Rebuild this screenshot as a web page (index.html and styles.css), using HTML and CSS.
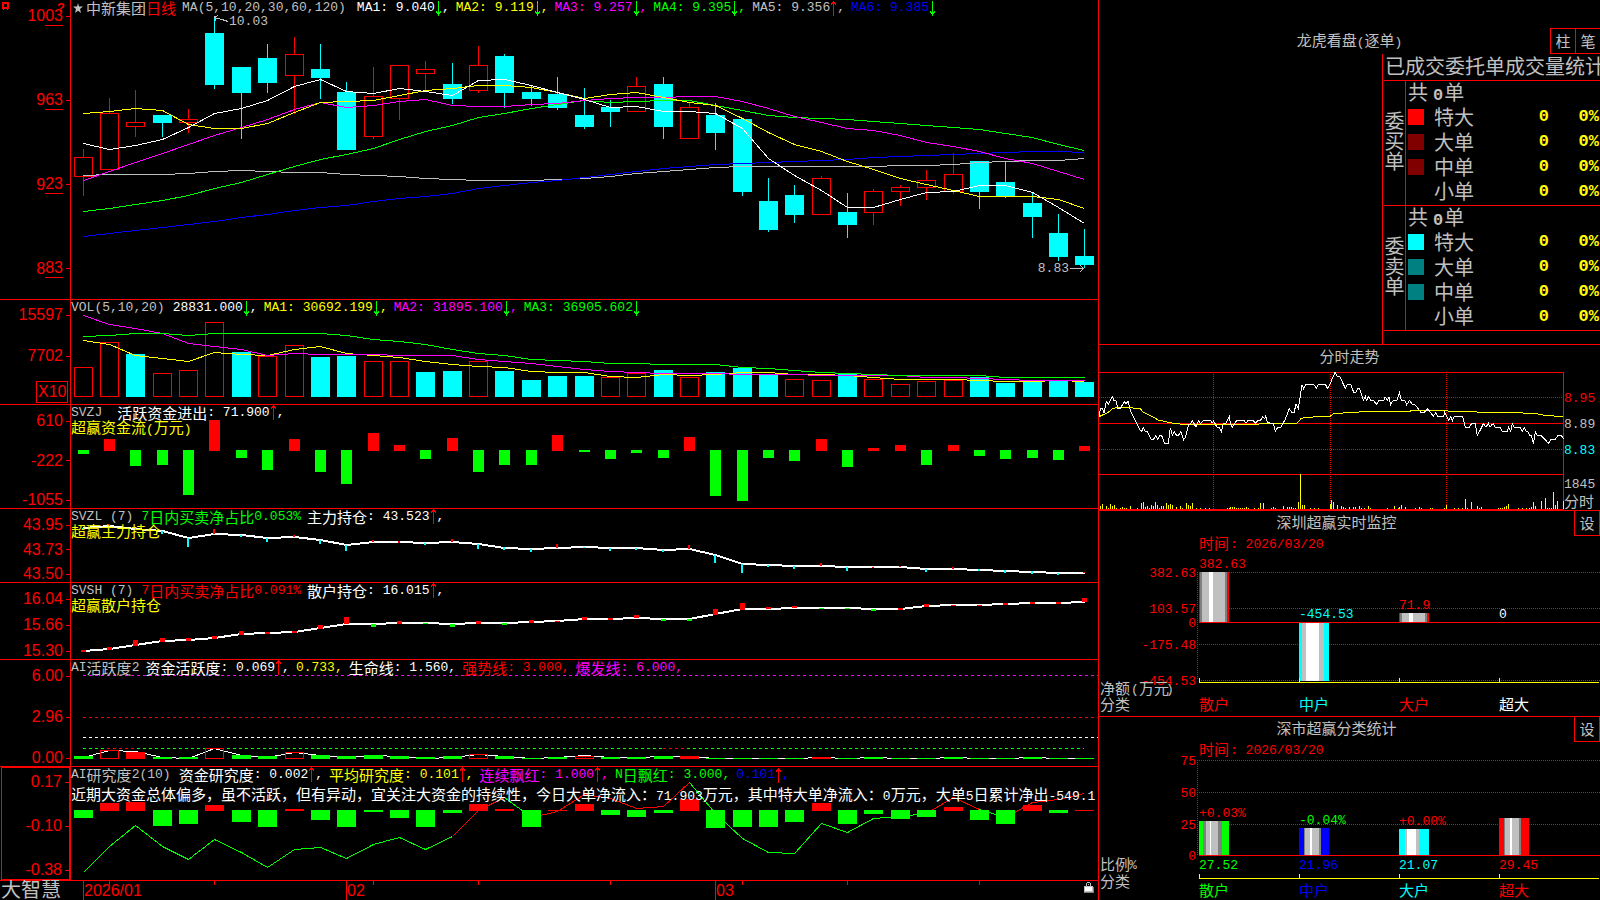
FILE: index.html
```html
<!DOCTYPE html>
<html lang="zh-CN">
<head>
<meta charset="utf-8">
<title>中新集团 日线 - 大智慧</title>
<link rel="stylesheet" href="styles.css">
</head>
<body>
<svg class="defs" aria-hidden="true">
  <symbol id="down" viewBox="0 0 5 15"><path d="M2 0h1v15h-1zM0 10h1v1h3v-1h1v2h-1v1h-1v1h-1v-1h-1v-1h-1z" fill="#0f0"/></symbol>
  <symbol id="up" viewBox="0 0 5 15"><path d="M2 0h1v15h-1zM2 0h1v1h1v1h1v2h-1v-1h-3v1h-1v-2h1v-1h1z" fill="red"/></symbol>
</svg>
<main class="terminal">
  <section class="charts">
    <article class="panel">
      <div class="axis axis-price">
        <svg class="pin" viewBox="0 0 8 9"><path d="M0 0h7v7h-7zM2 2v3h3v-3zM1 7h1v1h-1zM5 7h1v1h-1z" fill="red" fill-rule="evenodd"/></svg>
        <span class="help">?</span>
        <span class="tick">10<span class="cents">03</span></span><span class="tick">9<span class="cents">63</span></span><span class="tick">9<span class="cents">23</span></span><span class="tick">8<span class="cents">83</span></span>
      </div>
      <div class="plot">
        <svg class="canvas" id="price" viewBox="71 0 1027 299" preserveAspectRatio="none"></svg>
        <header class="legend">
          <span class="name"><svg class="star" viewBox="0 0 10 10"><path d="M5 0l1 3.500h4l-3 2.500 1 4-3-2.300-3 2.300 1-4-3-2.500h4z" fill="silver"/></svg>中新集团<span class="red">日线</span></span>
          <span class="num silver wider">MA(5,10,20,30,60,120)</span>
          <span class="num">MA1: 9.040<svg class="arrow"><use href="#down"/></svg>,</span>
          <span class="num yellow">MA2: 9.119<svg class="arrow"><use href="#down"/></svg>,</span>
          <span class="num magenta">MA3: 9.257<svg class="arrow"><use href="#down"/></svg>,</span>
          <span class="num green">MA4: 9.395<svg class="arrow"><use href="#down"/></svg>,</span>
          <span class="num silver">MA5: 9.356<svg class="arrow"><use href="#up"/></svg>,</span>
          <span class="num blue">MA6: 9.385<svg class="arrow"><use href="#down"/></svg></span>
        </header>
        <span class="note note-high num">10.03</span>
        <span class="note note-low num">8.83</span>
      </div>
    </article>

    <article class="panel">
      <div class="axis axis-vol"><span class="tick">15597</span><span class="tick">7702</span><span class="unit">X10</span></div>
      <div class="plot">
        <svg class="canvas" id="volume" viewBox="71 300 1027 104" preserveAspectRatio="none"></svg>
        <header class="legend">
          <span class="num silver wide">VOL(5,10,20)</span>
          <span class="num">28831.000<svg class="arrow"><use href="#down"/></svg>,</span>
          <span class="num yellow">MA1: 30692.199<svg class="arrow"><use href="#down"/></svg>,</span>
          <span class="num magenta">MA2: 31895.100<svg class="arrow"><use href="#down"/></svg>,</span>
          <span class="num green">MA3: 36905.602<svg class="arrow"><use href="#down"/></svg></span>
        </header>
      </div>
    </article>

    <article class="panel">
      <div class="axis"><span class="tick">610</span><span class="tick">-222</span><span class="tick">-1055</span></div>
      <div class="plot">
        <svg class="canvas" id="flow" viewBox="71 405 1027 103" preserveAspectRatio="none"></svg>
        <header class="legend">
          <span class="num silver far">SVZJ</span>
          <span>活跃资金进出<span class="num">: 71.900<svg class="arrow"><use href="#up"/></svg>,</span></span>
        </header>
        <p class="caption">超赢资金流<span class="num">(</span>万元<span class="num">)</span></p>
      </div>
    </article>

    <article class="panel">
      <div class="axis"><span class="tick">43.95</span><span class="tick">43.73</span><span class="tick">43.50</span></div>
      <div class="plot">
        <svg class="canvas" id="major" viewBox="71 509 1027 73" preserveAspectRatio="none"></svg>
        <header class="legend">
          <span class="num silver wide">SVZL (7)</span>
          <span class="green"><span class="num">7</span>日内买卖净占比<span class="num">0.053%</span></span>
          <span>主力持仓<span class="num">: 43.523<svg class="arrow"><use href="#up"/></svg>,</span></span>
        </header>
        <p class="caption">超赢主力持仓</p>
      </div>
    </article>

    <article class="panel">
      <div class="axis"><span class="tick">16.04</span><span class="tick">15.66</span><span class="tick">15.30</span></div>
      <div class="plot">
        <svg class="canvas" id="retail" viewBox="71 583 1027 76" preserveAspectRatio="none"></svg>
        <header class="legend">
          <span class="num silver wide">SVSH (7)</span>
          <span class="red"><span class="num">7</span>日内买卖净占比<span class="num">0.091%</span></span>
          <span>散户持仓<span class="num">: 16.015<svg class="arrow"><use href="#up"/></svg>,</span></span>
        </header>
        <p class="caption">超赢散户持仓</p>
      </div>
    </article>

    <article class="panel">
      <div class="axis"><span class="tick">6.00</span><span class="tick">2.96</span><span class="tick">0.00</span></div>
      <div class="plot">
        <svg class="canvas" id="active" viewBox="71 660 1027 106" preserveAspectRatio="none"></svg>
        <header class="legend">
          <span class="silver"><span class="num">AI</span>活跃度<span class="num">2</span></span>
          <span>资金活跃度<span class="num">: 0.069<svg class="arrow"><use href="#up"/></svg>,</span></span>
          <span class="num yellow">0.733,</span>
          <span>生命线<span class="num">: 1.560,</span></span>
          <span class="red">强势线<span class="num">: 3.000,</span></span>
          <span class="magenta">爆发线<span class="num">: 6.000,</span></span>
        </header>
      </div>
    </article>

    <article class="panel">
      <div class="axis selected"><span class="tick">0.17</span><span class="tick">-0.10</span><span class="tick">-0.38</span></div>
      <div class="plot">
        <svg class="canvas" id="research" viewBox="71 767 1027 113" preserveAspectRatio="none"></svg>
        <header class="legend">
          <span class="silver wide"><span class="num">AI</span>研究度<span class="num">2(10)</span></span>
          <span>资金研究度<span class="num">: 0.002<svg class="arrow"><use href="#up"/></svg>,</span></span>
          <span class="yellow">平均研究度<span class="num">: 0.101<svg class="arrow"><use href="#up"/></svg>,</span></span>
          <span class="magenta">连续飘红<span class="num">: 1.000<svg class="arrow"><use href="#up"/></svg>,</span></span>
          <span class="green"><span class="num">N</span>日飘红<span class="num">: 3.000,</span></span>
          <span class="num blue">0.101<svg class="arrow"><use href="#up"/></svg>,</span>
        </header>
        <p class="remark">近期大资金总体偏多，虽不活跃，但有异动，宜关注大资金的持续性，今日大单净流入：<span class="num">71.903</span>万元，其中特大单净流入：<span class="num">0</span>万元，大单<span class="num">5</span>日累计净出<span class="num">-549.1</span></p>
      </div>
    </article>

    <footer class="timeline">
      <span class="brand">大智慧</span>
      <div class="dates">
        <svg class="canvas" id="dates" viewBox="71 881 1027 19" preserveAspectRatio="none"></svg>
        <span class="month m1">2026/01</span><span class="month m2">02</span><span class="month m3">03</span>
        <svg class="lock" viewBox="0 0 10 12" shape-rendering="crispEdges"><path d="M2 1h1v3h-1zM6 1h1v3h-1zM3 0h3v1h-3zM4 2h1v1h-1z" fill="silver"/><path d="M0 4h9v6h-9z" fill="silver"/><path d="M1 5h7v4h-7z" fill="#fff"/><path d="M9 5h1v6h-10v-1h9z" fill="gray"/></svg>
      </div>
    </footer>
  </section>

  <aside class="side">
    <section class="orders">
      <h2 class="orders-title">龙虎看盘<span class="num">(</span>逐单<span class="num">)</span></h2>
      <div class="modes"><button type="button">柱</button><button type="button">笔</button></div>
      <div class="stats">
        <h3>已成交委托单成交量统计</h3>
        <table>
          <colgroup><col class="c-side"><col class="c-swatch"><col class="c-name"><col class="c-count"><col class="c-pct"></colgroup>
          <tbody>
            <tr><th class="side-name" rowspan="5" scope="rowgroup">委买单</th><td class="total" colspan="4">共<b>0</b>单</td></tr>
            <tr><td><i class="swatch s-red"></i></td><th scope="row">特大</th><td class="v">0</td><td class="v">0%</td></tr>
            <tr><td><i class="swatch s-maroon"></i></td><th scope="row">大单</th><td class="v">0</td><td class="v">0%</td></tr>
            <tr><td><i class="swatch s-maroon"></i></td><th scope="row">中单</th><td class="v">0</td><td class="v">0%</td></tr>
            <tr><td></td><th scope="row">小单</th><td class="v">0</td><td class="v">0%</td></tr>
          </tbody>
          <tbody>
            <tr><th class="side-name" rowspan="5" scope="rowgroup">委卖单</th><td class="total" colspan="4">共<b>0</b>单</td></tr>
            <tr><td><i class="swatch s-cyan"></i></td><th scope="row">特大</th><td class="v">0</td><td class="v">0%</td></tr>
            <tr><td><i class="swatch s-teal"></i></td><th scope="row">大单</th><td class="v">0</td><td class="v">0%</td></tr>
            <tr><td><i class="swatch s-teal"></i></td><th scope="row">中单</th><td class="v">0</td><td class="v">0%</td></tr>
            <tr><td></td><th scope="row">小单</th><td class="v">0</td><td class="v">0%</td></tr>
          </tbody>
        </table>
      </div>
    </section>

    <section class="intraday">
      <h2>分时走势</h2>
      <div class="intraday-body">
        <svg id="minute" viewBox="27 96 1395 414" preserveAspectRatio="none"></svg>
        <div class="scale num"><span class="red">8.95</span><span>8.89</span><span class="cyan">8.83</span><span class="vol">1845</span><span class="cjk">分时</span></div>
      </div>
    </section>

    <section class="stat-panel">
      <div class="stat-head"><h2>深圳超赢实时监控</h2><button type="button">设</button></div>
      <svg class="stat-chart" viewBox="1099 536 501 180">
        <text class="c" x="1199" y="549" fill="red">时间</text><text x="1230" y="548" fill="red">: 2026/03/20</text>
        <g class="dots"><path d="M1229 572.500H1600M1229 608.500H1600M1199 644.500H1600M1199 680.500H1600M1197.500 572V680"/></g>
        <g class="ax" fill="red"><text x="1196" y="577">382.63</text><text x="1196" y="613">103.57</text><text x="1196" y="627">0</text><text x="1196" y="649">-175.48</text><text x="1196" y="685">-454.53</text></g>
        <g id="bars-a" shape-rendering="crispEdges"></g>
        <path class="ln" stroke="red" d="M1199 622.500H1600"/>
        <path class="ln" stroke="#ff0" d="M1199.500 678V682.500H1599M1299.500 678V682M1399.500 678V682M1499.500 678V682"/>
        <text x="1199" y="568" fill="red">382.63</text><text x="1299" y="618" fill="cyan">-454.53</text><text x="1399" y="609" fill="red">71.9</text><text x="1499" y="618" fill="#fff">0</text>
        <g fill="silver"><text class="c" x="1100" y="694">净额</text><text x="1131" y="693">(</text><text class="c" x="1139" y="694">万元</text><text x="1166" y="693">)</text><text class="c" x="1100" y="710">分类</text></g>
        <text class="c" x="1199" y="710" fill="red">散户</text><text class="c" x="1299" y="710" fill="cyan">中户</text><text class="c" x="1399" y="710" fill="red">大户</text><text class="c" x="1499" y="710" fill="#fff">超大</text>
      </svg>
    </section>

    <section class="stat-panel">
      <div class="stat-head"><h2>深市超赢分类统计</h2><button type="button">设</button></div>
      <svg class="stat-chart" viewBox="1099 742 501 158">
        <text class="c" x="1199" y="755" fill="red">时间</text><text x="1230" y="754" fill="red">: 2026/03/20</text>
        <g class="dots"><path d="M1199 760.500H1600M1199 792.500H1600M1229 824.500H1600M1197.500 760V855"/></g>
        <g class="ax" fill="red"><text x="1196" y="765">75</text><text x="1196" y="797">50</text><text x="1196" y="829">25</text><text x="1196" y="860">0</text></g>
        <g id="bars-b" shape-rendering="crispEdges"></g>
        <path class="ln" stroke="red" d="M1199 855.500H1600"/>
        <path class="ln" stroke="#ff0" d="M1199.500 874V878.500H1599M1299.500 874V878M1399.500 874V878M1499.500 874V878"/>
        <text x="1199" y="817" fill="red">+0.03%</text><text x="1299" y="824" fill="#0f0">-0.04%</text><text x="1399" y="825" fill="red">+0.00%</text>
        <text x="1199" y="869" fill="#0f0">27.52</text><text x="1299" y="869" fill="#00f">21.96</text><text x="1399" y="869" fill="cyan">21.07</text><text x="1499" y="869" fill="red">29.45</text>
        <g fill="silver"><text class="c" x="1100" y="870">比例</text><text x="1129" y="869">%</text><text class="c" x="1100" y="887">分类</text></g>
        <text class="c" x="1199" y="896" fill="#0f0">散户</text><text class="c" x="1299" y="896" fill="#00f">中户</text><text class="c" x="1399" y="896" fill="cyan">大户</text><text class="c" x="1499" y="896" fill="red">超大</text>
      </svg>
    </section>
  </aside>
</main>
<script src="charts.js"></script>
</body>
</html>
```

FILE: styles.css
```css
* { box-sizing: border-box; margin: 0; padding: 0; }

body {
  background: #000;
  color: #fff;
  font: 15px/16px "Noto Sans CJK SC", sans-serif;
  font-weight: 400;
  overflow: hidden;
}

.defs { position: absolute; width: 0; height: 0; }

.num { font-family: "Liberation Mono", monospace; font-size: 13px; font-weight: 400; white-space: pre; }
.silver { color: #c0c0c0; }
.red { color: #f00; }
.yellow { color: #ff0; }
.magenta { color: #f0f; }
.green { color: #0f0; }
.blue { color: #00f; }
.cyan { color: #0ff; }

.terminal {
  display: grid;
  grid-template-columns: minmax(0, 1099fr) minmax(0, 501fr);
  min-height: 100vh;
}

/* left column */
.charts {
  display: grid;
  grid-template-rows: 300fr 105fr 104fr 74fr 77fr 107fr 114fr 19px;
  border-right: 1px solid #f00;
}
.panel {
  display: grid;
  grid-template-columns: 71px minmax(0, 1fr);
  border-bottom: 1px solid #f00;
  min-height: 0;
}
.axis {
  position: relative;
  display: flex;
  flex-direction: column;
  justify-content: space-between;
  padding-top: 7px;
  margin-bottom: -1px;
  border-right: 1px solid #f00;
  color: #f00;
  font: 16px/18px "Liberation Sans", sans-serif;
}
.axis-price { padding: 7px 0 22px; }
.axis-vol { padding: 6px 0 2px; }
.axis-vol .unit { margin-top: -7px; }
.selected { border: 1px solid #f00; border-right-width: 2px; margin: 0 0 0 1px; padding-top: 5px; }
.tick { display: flex; justify-content: flex-end; align-items: center; height: 18px; }
.tick::after { content: ""; width: 4px; height: 1px; margin-left: 3px; background: #f00; }
.cents { height: 19px; border-bottom: 1px solid #f00; }
.unit { align-self: flex-end; width: 32px; height: 22px; margin-right: 2px; padding-left: 1px; line-height: 20px; border: 1px solid #f00; }
.pin { position: absolute; left: 2px; top: 2px; width: 8px; height: 9px; }
.help { position: absolute; left: 57px; top: 0; font-weight: 700; font-size: 13px; line-height: 16px; }

.plot { position: relative; min-width: 0; }
.canvas { position: absolute; left: 0; top: 0; width: 100%; height: 100%; shape-rendering: crispEdges; }
.legend { position: relative; display: flex; gap: 6px; height: 16px; white-space: nowrap; }
.legend > * { display: flex; align-items: center; height: 16px; }
.wide { margin-right: 2px; }
.wider { margin-right: 5px; }
.far { margin-right: 9px; }
.arrow { width: 5px; height: 15px; margin: 0 1px; flex: none; }
.num .arrow { align-self: center; vertical-align: top; }
.name { color: #c0c0c0; padding-left: 2px; }
.star { width: 10px; height: 10px; margin-right: 3px; }
.caption { position: relative; margin-top: -1px; color: #ff0; line-height: 14px; white-space: nowrap; }
.remark { position: relative; margin-top: 2px; line-height: 18px; white-space: nowrap; }
.note { position: absolute; color: #c0c0c0; }
.note-high { left: 158px; top: 14px; }
.note-low { right: 29px; top: 261px; }

.timeline { display: grid; grid-template-columns: 71px minmax(0, 1fr); }
.brand { color: #c0c0c0; font-size: 20px; line-height: 16px; padding-left: 1px; white-space: nowrap; }
.dates { position: relative; color: #f00; font: 16px/19px "Liberation Sans", sans-serif; }
.month { position: absolute; top: 0; }
.m1 { left: 13px; }
.m2 { left: 276px; }
.m3 { left: 645px; }
.lock { position: absolute; right: 4px; top: 1px; width: 10px; height: 12px; }

/* right column */
.side { display: grid; grid-template-rows: 345px 166px 206px minmax(0, 1fr); color: #c0c0c0; min-width: 0; }
h2, h3 { font-size: 15px; font-weight: 400; text-align: center; }
button {
  width: 26px; height: 26px;
  background: #000; color: #c0c0c0;
  border: 1px solid #f00;
  font: 400 15px/20px "Noto Sans CJK SC", sans-serif;
}
.orders {
  display: grid;
  grid-template-columns: minmax(0, 1fr) 218px;
  grid-template-rows: 26px minmax(0, 1fr);
  padding-top: 28px;
  border-bottom: 1px solid #f00;
  overflow: hidden;
}
.orders-title { grid-column: 1 / 3; grid-row: 1; line-height: 24px; }
.modes { grid-column: 2; grid-row: 1; display: flex; justify-content: flex-end; }
.modes button + button { width: 25px; margin-left: -1px; border-right: 0; }
.modes button { padding: 0; }
.stats { grid-column: 2; border-left: 1px solid #f00; overflow: hidden; padding-left: 1px; }
.stats h3 { height: 27px; font-size: 20px; line-height: 23px; text-align: left; padding-left: 1px; white-space: nowrap; border-bottom: 1px solid #f00; }
table { width: 100%; table-layout: fixed; border-collapse: separate; border-spacing: 0; font-size: 20px; line-height: 20px; }
.c-side { width: 22px; }
.c-swatch { width: 28px; }
.c-name { width: 50px; }
.c-count { width: 66px; }
tr { height: 25px; }
tr:last-child > *, .side-name { border-bottom: 1px solid #f00; }
th { font-weight: 400; text-align: left; }
td, th { height: 25px; vertical-align: middle; }
th[scope="row"] { line-height: 18px; padding-bottom: 4px; }
.side-name { line-height: 20px; border-right: 1px solid #f00; text-align: center; white-space: normal; padding-bottom: 4px; }
.total { line-height: 18px; padding: 0 0 4px 2px; }
.total b { margin: 0 1px 0 5px; }
.total b, .v { font-family: "Liberation Mono", monospace; font-size: 17px; font-weight: 700; line-height: 16px; }
.total b { line-height: 1px; }
.v { color: #ff0; text-align: right; padding: 0 1px 3px 0; }
.swatch { display: block; width: 16px; height: 16px; margin: 0 0 3px 2px; }
.s-red { background: #f00; }
.s-maroon { background: #800000; }
.s-cyan { background: #0ff; }
.s-teal { background: #008080; }

.intraday { border-bottom: 1px solid #f00; }
.intraday h2 { height: 27px; line-height: 22px; }
.intraday-body { display: grid; grid-template-columns: minmax(0, 1fr) 36px; height: 138px; }
.intraday-body svg { width: 100%; height: 138px; }
.scale { display: flex; flex-direction: column; padding: 19px 0 0; gap: 10px; }
.scale .vol { margin-top: 8px; }
.scale .cjk { margin-top: -10px; font: 400 15px/16px "Noto Sans CJK SC", sans-serif; }

.stat-panel { position: relative; border-bottom: 1px solid #f00; }
.stat-panel:last-child { border-bottom: 0; }
.stat-head { display: flex; height: 25px; }
.stat-head h2 { flex: 1; line-height: 22px; }
.stat-head button { height: 25px; border-top: 0; }
.stat-chart { display: block; width: 100%; overflow: visible; }
.stat-chart text { font: 13px "Liberation Mono", monospace; white-space: pre; }
.stat-chart .c { font: 400 15px "Noto Sans CJK SC", sans-serif; }
.ax { text-anchor: end; }
.dots path { fill: none; stroke: #f00; stroke-dasharray: 1 1; shape-rendering: crispEdges; }
.ln { fill: none; shape-rendering: crispEdges; }
```

FILE: charts.js
```js
const NS = 'http://www.w3.org/2000/svg';
const RED = '#f00', GREEN = '#0f0', CYAN = '#0ff', WHITE = '#fff', YELLOW = '#ff0',
      MAGENTA = '#f0f', SILVER = '#c0c0c0', GRAY = '#808080', BLUE = '#00f';

const add = (id, tag, attrs) => {
  const el = document.createElementNS(NS, tag);
  for (const k in attrs) el.setAttribute(k, attrs[k]);
  document.getElementById(id).appendChild(el);
};
/* centre column of each trading day */
const days = [83,109,135,162,188,214,241,267,294,320,346,373,399,425,452,478,504,531,557,584,610,636,663,689,715,742,768,794,821,847,873,900,926,953,979,1005,1032,1058,1084];
const cx = i => days[i];
/* vertical positions are kept in thirds of a pixel below a base */
const py = (v, base) => base + Math.round(v / 3);
const rect = (id, x, y, w, h, fill) => add(id, 'rect', { x, y, width: w, height: Math.max(h, 1), fill });
const hollow = (id, x, y, w, h) =>
  add(id, 'rect', { x: x + .5, y: y + .5, width: w - 1, height: Math.max(h - 1, 1), fill: 'none', stroke: RED });
const line = (id, values, base, color, width = 1, from = 0) =>
  add(id, 'polyline', {
    points: values.map((v, i) => `${cx(i + from) + .5},${py(v, base) + (width === 1 ? .5 : 0)}`).join(' '),
    fill: 'none', stroke: color, 'stroke-width': width
  });

/* price: kind, body top, body bottom, high, low */
const candles = `r472,529,447,588 r340,506,294,506 r367,379,270,411 c346,369,346,411 r358,367,327,399
c99,255,48,267 c201,279,201,417 c174,249,132,279 r163,226,111,342 c207,234,132,297 c276,450,246,450
r289,409,201,417 r196,295,196,360 r208,220,183,270 c252,297,189,312 r196,271,138,279 c168,279,162,324
c276,297,255,318 c282,324,231,330 c345,381,264,387 c321,336,300,381 r259,334,231,334 c252,381,231,417
r322,415,309,415 c345,399,309,450 c357,576,357,588 c603,690,534,696 c585,645,555,669 r535,643,528,643
c636,675,579,714 r574,637,567,675 r562,574,555,618 r541,562,510,600 r523,574,460,582 c483,576,483,627
c546,588,484,594 c609,651,579,714 c699,771,642,783 c768,795,687,805`.split(/\s+/);
candles.forEach((c, i) => {
  const [t, b, hi, lo] = c.slice(1).split(',').map(v => py(+v, 0));
  const x = cx(i);
  if (c[0] === 'c') {
    rect('price', x, hi, 1, lo - hi, CYAN);
    rect('price', x - 9, t, 19, b - t, CYAN);
  } else {
    if (t > hi) rect('price', x, hi, 1, t - hi, RED);
    if (lo > b) rect('price', x, b, 1, lo - b, RED);
    hollow('price', x - 9, t, 19, b - t + 1);
  }
});
line('price', [526,523,523,523,520,514,511,514,517,517,523,526,529,533,538,541,541,541,538,535,529,520,514,508,502,499,499,499,499,499,499,496,496,491,487,484,481,479,475], 0, SILVER);
line('price', [709,700,691,682,673,664,652,643,631,622,616,604,595,587,578,565,556,547,540,530,522,513,504,497,491,490,487,484,481,477,472,469,466,461,458,457,454,454,457], 0, BLUE);
line('price', [634,625,613,601,586,565,547,523,499,478,462,443,418,394,376,352,338,324,312,301,307,304,301,301,315,331,346,352,355,358,364,370,376,382,388,400,412,431,450], 0, GREEN);
line('price', [541,514,487,458,433,404,380,358,328,305,322,316,304,298,315,319,319,313,308,299,293,290,290,287,289,304,325,347,366,385,391,406,425,439,452,473,490,514,537], 0, MAGENTA);
line('price', [338,334,325,329,371,385,385,370,336,307,304,301,284,269,263,256,256,260,275,293,281,277,292,306,316,355,396,431,452,482,506,535,551,571,589,589,587,598,625], 0, YELLOW);
line('price', [430,448,436,416,381,338,325,300,258,236,272,278,265,273,286,239,236,256,276,296,322,319,334,334,338,384,474,526,570,622,622,597,577,574,556,556,576,620,670], 0, WHITE);
add('price', 'path', { d: 'M228 21.500L222 19.500L214.500 17.500M218 15.500L214.500 17L216 21M1070 268.500H1083.500M1080 265L1083.500 268.500L1080 272', fill: 'none', stroke: SILVER });

/* volume */
const vols = 'r217 r142 c177 r235 r226 r82 c171 r184 r151 c186 c183 r199 r199 c231 c228 r199 c228 c255 c243 c243 r247 r235 c225 r247 c231 c219 c240 r253 r256 c237 r253 r268 r259 r256 c246 c264 c257 c257 c261'.split(' ');
vols.forEach((v, i) => {
  const y = py(+v.slice(1), 295);
  if (v[0] === 'c') rect('volume', cx(i) - 9, y, 19, 397 - y, CYAN);
  else hollow('volume', cx(i) - 9, y, 19, 397 - y);
});
line('volume', [136,146,180,190,199,172,178,181,163,154,173,181,186,199,208,212,217,228,232,232,243,247,238,241,236,232,232,236,238,241,246,253,253,253,256,259,258,256,259], 295, YELLOW);
line('volume', [61,86,98,113,145,154,163,181,175,178,176,178,181,181,181,193,199,205,214,223,229,232,235,235,235,238,238,238,241,241,241,241,246,247,249,253,256,256,256], 295, MAGENTA);
line('volume', [124,121,115,115,121,115,115,115,113,113,119,133,139,146,163,175,181,193,196,199,203,205,208,208,208,216,220,226,232,234,237,240,240,240,240,246,247,247,247], 295, GREEN);

/* bars growing from a zero line: red upward, green downward */
const signed = (id, data, base, zero, w) => data.split(' ').forEach((v, i) => {
  const y = py(+v.slice(1), base), x = cx(i) - (w - 1) / 2;
  if (v[0] === 'r') rect(id, x, y, w, zero + 1 - y, RED);
  else rect(id, x, zero, w, y - zero, GREEN);
});
signed('flow', 'g477 r432 g513 g510 g600 r375 g489 g525 r432 g531 g567 r414 r450 g492 r429 g531 g510 g510 r420 g471 g492 g474 g489 r426 g603 g618 g489 g498 r432 g516 r459 r450 g510 r450 g483 g492 g489 g495 r453', 295, 450, 11);

/* holdings: thick line with per-day marks */
const marks = (id, data, base, w) => data.split(' ').forEach((v, i) => {
  const [a, b] = v.slice(1).split('-').map(n => py(+n, base));
  rect(id, cx(i) - (w >> 1), a, w, b - a, { r: RED, c: CYAN, g: GREEN }[v[0]]);
});
line('major', [698,693,701,709,730,718,720,730,725,736,751,742,742,744,742,748,758,763,758,757,760,760,765,762,781,806,811,813,813,816,816,816,822,822,825,827,830,834,834], 295, WHITE, 2);
marks('major', 'c698-704 r687-693 c700-706 c708-717 c730-755 r702-718 c719-725 c730-740 r719-725 c736-746 c751-768 r735-742 r738-743 c744-749 r732-741 c748-762 c757-765 c763-770 r747-758 c756-759 c760-768 c759-765 c766-771 r750-761 c781-804 c806-834 c810-816 c814-822 r804-813 c817-828 r816-819 r813-816 c823-831 r816-822 c822-828 c826-834 c828-837 c834-840 r831-834', 295, 2);
line('retail', [213,208,195,183,181,175,162,160,157,144,131,131,129,130,131,130,130,126,124,118,117,113,118,118,103,88,86,83,83,85,87,87,78,76,75,72,69,69,65], 580, WHITE, 2);
marks('retail', 'r210-215 r201-210 r180-197 r174-185 r174-182 r168-177 r153-165 r155-161 r153-159 r135-147 r111-131 g131-140 r123-131 g129-132 g131-140 r123-131 g129-134 r120-129 r123-126 r111-120 r114-119 r105-113 g117-123 g117-123 r87-104 r69-90 r81-87 r78-84 g84-87 g84-87 g87-93 r84-90 r72-81 r75-78 r75-78 r69-75 r66-72 r66-72 r54-66', 580, 5);

/* activity */
const dash = (y, x1, x2, color) =>
  add('active', 'line', { x1, x2, y1: y + .5, y2: y + .5, stroke: color, 'stroke-dasharray': '3 3' });
dash(675, 83, 1098, MAGENTA); dash(717, 83, 1098, RED); dash(737, 83, 1098, WHITE);
dash(748, 83, 107, GREEN); dash(748, 107, 137, RED); dash(748, 137, 663, GREEN);
dash(748, 663, 687, RED); dash(748, 687, 1084, GREEN);
line('active', [531,511,513,531,533,505,524,530,517,525,530,526,528,533,530,523,528,535,531,526,532,531,528,529,534,535,535,535,531,535,532,535,535,531,535,535,530,535,535], 580, WHITE);
'g528 h511 r516 g530 g530 h505 g525 g528 h517 g525 g528 g526 g528 g530 g528 h523 g528 g533 g531 h529 g531 g531 g528 r528 g534 g534 g534 g534 r531 g534 g531 g534 g534 g531 g534 g534 g531 g534 g534'.split(' ').forEach((v, i) => {
  const y = py(+v.slice(1), 580), x = cx(i) - 9;
  if (v[0] === 'h') hollow('active', x, y, 19, 759 - y);
  else rect('active', x, y, 19, 759 - y, v[0] === 'r' ? RED : GREEN);
});

/* research */
const trend = [877,798,734,797,838,778,815,862,806,801,835,791,771,807,768,690,652,710,693,642,655,685,679,607,700,773,817,820,730,757,713,707,700,652,686,710,665,658,640];
[[0, 14, GREEN], [14, 16, RED], [16, 17, GREEN], [17, 23, RED], [23, 32, GREEN], [32, 34, RED], [34, 35, GREEN], [35, 38, RED]]
  .forEach(([a, b, c]) => line('research', trend.slice(a, b + 1), 580, c, 1, a));
signed('research', 'g714 r669 r666 g738 g732 r675 g726 g741 r687 g720 g741 g696 g714 g741 g699 r672 r687 g741 r690 r672 g705 g711 g699 r657 g744 g741 g741 g726 r669 g732 g702 g717 g711 r681 g720 g732 r675 g699 r690', 580, 810, 19);

/* time axis */
[0, 10, 24].forEach(i => rect('dates', cx(i), 881, 1, 19, RED));
[1, 5, 11, 15, 20, 25, 29, 34].forEach(i => rect('dates', cx(i), 881, 1, 4, RED));

/* intraday: three units to the pixel */
const m = (tag, attrs) => add('minute', tag, { fill: 'none', 'stroke-width': 3, 'shape-rendering': 'crispEdges', ...attrs });
m('path', { d: 'M27 172.500H1420M27 328.500H1420M370.500 97V507M721.500 97V507M1069.500 97V507', stroke: RED, 'stroke-dasharray': '3 3' });
m('path', { d: 'M27 97.500H1420.500V510M27 250.500H1420M27 403.500H1420M27 508.500H1422', stroke: RED });
m('polyline', { stroke: YELLOW, points: '27,230 55,217 68,205 90,202 150,205 160,217 180,226 205,240 250,250 280,253 505,253 515,250 620,250 633,236 645,232 720,229 730,222 760,219 825,215 960,214 965,211 1060,211 1080,214 1160,216 1260,218 1335,220 1365,226 1420,230' });
m('polyline', { stroke: WHITE, points: '27,230 31,206 38,206 42,218 49,184 55,193 67,170 72,182 78,182 84,206 91,206 103,184 108,193 114,182 122,215 150,270 155,274 160,263 166,274 172,275 184,299 190,299 197,287 203,299 209,287 215,287 224,311 235,311 241,263 247,287 253,275 260,287 265,287 272,275 281,299 286,292 296,253 302,251 307,241 318,262 326,242 331,250 341,242 362,242 366,250 371,243 381,262 388,262 394,274 400,251 407,250 418,230 421,250 427,262 434,250 440,242 463,242 468,250 473,242 490,242 497,250 503,242 511,242 518,230 524,236 527,229 533,248 550,251 556,274 563,262 573,262 580,248 585,240 598,206 606,218 612,218 618,193 625,206 636,135 641,146 647,134 672,134 679,145 685,134 707,134 712,146 721,130 735,97 741,109 749,109 766,145 771,134 783,134 791,157 797,157 803,146 809,147 820,181 826,170 829,182 836,169 842,182 852,182 859,194 866,182 881,182 885,170 892,181 897,170 902,194 909,182 920,182 928,158 934,182 945,182 950,194 959,181 967,193 974,193 993,217 1002,217 1013,206 1030,229 1037,218 1043,229 1061,229 1064,218 1076,242 1083,230 1087,242 1092,230 1118,230 1126,262 1138,262 1145,250 1156,250 1162,287 1181,250 1188,262 1195,250 1200,262 1205,254 1210,251 1215,262 1230,262 1237,274 1252,274 1256,262 1262,274 1267,252 1272,262 1290,262 1297,274 1303,263 1308,274 1313,274 1319,287 1324,286 1330,311 1336,276 1341,286 1353,286 1366,299 1375,311 1383,299 1396,298 1403,287 1414,286 1420,296' });
'31:9 37:15 49:9 54:3 60:15 67:10 73:12 79:3 91:3 97:6 103:3 109:3 122:9 142:3 154:18 160:21 166:7 172:9 178:4 184:12 190:9 196:21 202:12 208:3 214:9 220:9 229:18 235:12 241:15 247:12 259:6 271:9 277:3 289:18 295:12 301:9 307:18 319:4 331:3 346:3 358:3 412:3 417:3 421:6 427:6 433:6 439:3 445:3 451:3 457:4 463:3 469:6 475:3 493:3 505:3 511:18 520:18 544:3 550:6 556:3 580:9 592:6 598:6 604:6 610:3 616:3 625:21 631:105 637:12 643:12 661:3 673:3 685:3 721:15 724:27 730:21 742:12 754:9 760:6 766:3 778:6 790:6 796:6 808:9 814:3 822:3 835:9 841:3 892:3 913:9 925:3 928:6 934:12 946:6 976:3 988:6 994:3 1021:3 1027:3 1063:3 1069:12 1093:3 1105:3 1118:3 1126:30 1133:3 1145:21 1162:9 1168:3 1174:6 1225:3 1231:3 1237:4 1243:6 1249:9 1255:15 1285:3 1297:3 1309:3 1318:3 1324:6 1330:21 1336:9 1354:24 1366:33 1372:3 1378:3 1384:3 1390:51 1396:12 1402:24 1419:24'
  .split(' ').forEach(p => {
    const [x, h] = p.split(':').map(Number);
    m('rect', { x: x - 1, y: 507 - h, width: 3, height: h, fill: YELLOW });
  });

/* category columns: [width, colour] stripes from left to right */
const column = (id, x, y, h, stripes) => stripes.forEach(([w, c]) => { rect(id, x, y, w, h, c); x += w; });
const glossy = c => [[1, c], [2, GRAY], [7, SILVER], [4, WHITE], [12, SILVER], [2, GRAY], [2, c]];
column('bars-a', 1199, 572, 50, glossy(RED));
column('bars-a', 1299, 623, 58, [[3, CYAN], [4, SILVER], [13, WHITE], [5, SILVER], [5, CYAN]]);
column('bars-a', 1399, 613, 9, glossy(RED));
column('bars-b', 1199, 821, 34, [[4, GREEN], [3, GRAY], [4, SILVER], [1, WHITE], [7, SILVER], [4, GRAY], [7, GREEN]]);
column('bars-b', 1299, 828, 27, [[5, BLUE], [1, GRAY], [5, SILVER], [2, WHITE], [7, SILVER], [2, GRAY], [8, BLUE]]);
column('bars-b', 1399, 829, 26, [[6, CYAN], [2, SILVER], [9, WHITE], [3, SILVER], [10, CYAN]]);
column('bars-b', 1499, 818, 37, [[5, RED], [1, GRAY], [5, SILVER], [2, WHITE], [7, SILVER], [2, GRAY], [8, RED]]);
```
